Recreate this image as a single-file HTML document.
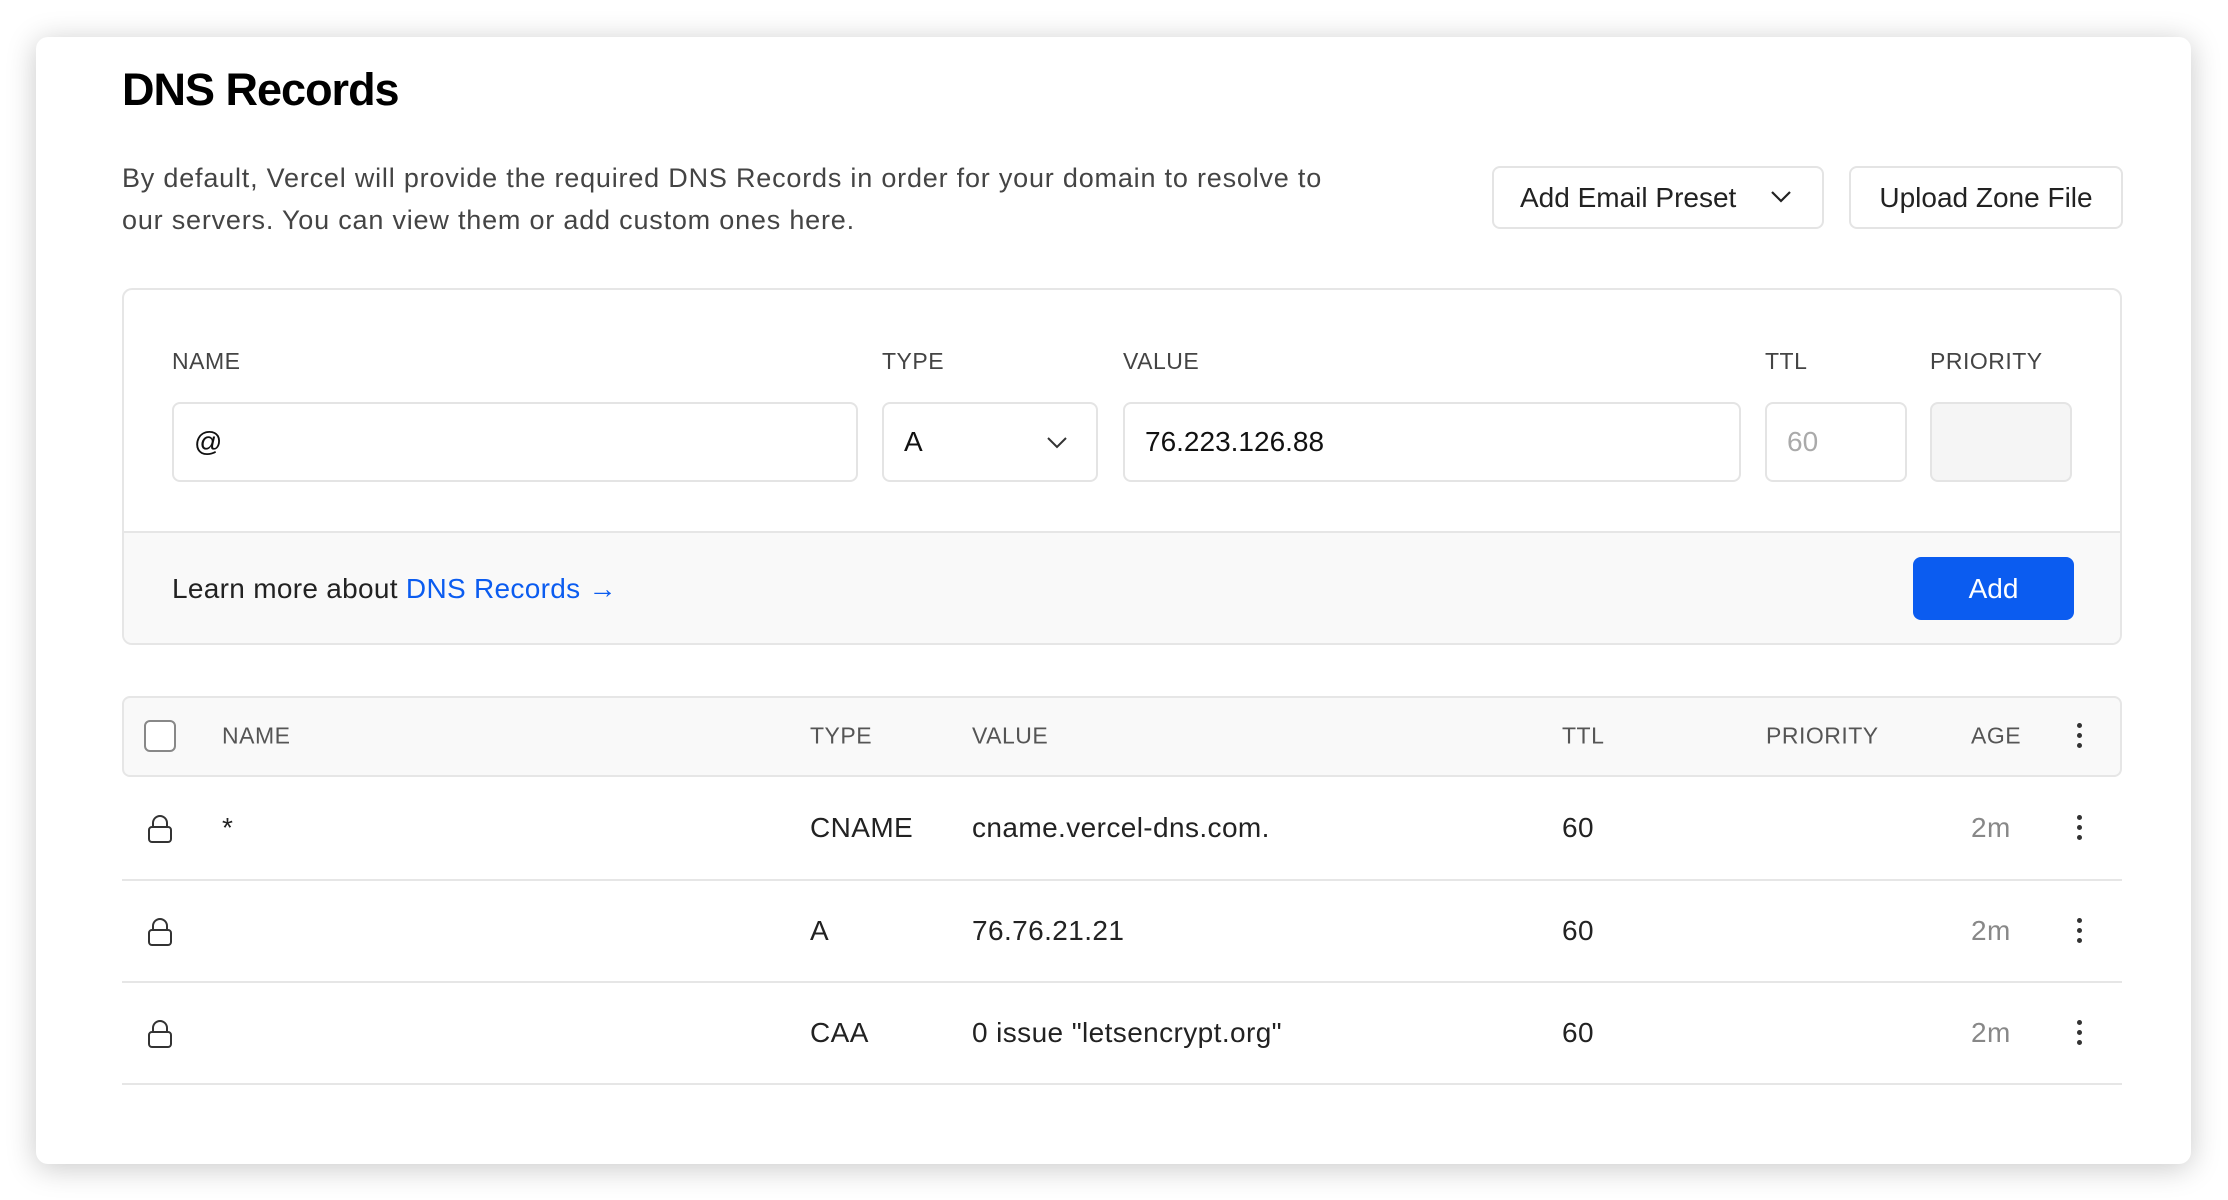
<!DOCTYPE html>
<html><head><style>
*{box-sizing:border-box;margin:0;padding:0}
body{width:2228px;height:1200px;background:#fff;font-family:"Liberation Sans",sans-serif;position:relative;overflow:hidden;color:#111}
.card{position:absolute;left:36px;top:37px;width:2155px;height:1127px;background:#fff;border-radius:12px;box-shadow:0 4px 30px rgba(0,0,0,.22)}
.a{position:absolute;white-space:nowrap}
h1{position:absolute;left:122px;top:64px;font-size:45px;font-weight:bold;letter-spacing:-1px;color:#000}
.desc{position:absolute;left:122px;top:157px;font-size:27px;line-height:42px;color:#444;letter-spacing:.8px}
.btn{position:absolute;top:166px;height:63px;border:2px solid #e4e4e4;border-radius:8px;font-size:28px;color:#222;display:flex;align-items:center;justify-content:center;background:#fff}
.form{position:absolute;left:122px;top:288px;width:2000px;height:357px;border:2px solid #e6e6e6;border-radius:10px;overflow:hidden}
.foot{position:absolute;left:0;right:0;top:241px;bottom:0;background:#f9f9f9;border-top:2px solid #e6e6e6}
.lbl{position:absolute;top:58px;font-size:23px;color:#444;letter-spacing:.5px}
.inp{position:absolute;top:112px;height:80px;border:2px solid #e4e4e4;border-radius:8px;font-size:28px;color:#111;padding-left:20px;display:flex;align-items:center}
.th{position:absolute;left:122px;top:696px;width:2000px;height:81px;background:#f9f9f9;border:2px solid #e6e6e6;border-radius:8px}
.h{position:absolute;top:736px;transform:translateY(-50%);font-size:23px;color:#555;letter-spacing:.5px}
.r{position:absolute;font-size:28px;color:#222;transform:translateY(-50%);letter-spacing:.4px}
.sep{position:absolute;left:122px;width:2000px;height:2px;background:#e6e6e6}
.dots{position:absolute;width:5px}
.dots i{display:block;width:5px;height:5px;border-radius:50%;background:#333;margin-bottom:5px}
</style></head><body>
<div class="card"></div>
<h1>DNS Records</h1>
<div class="desc">By default, Vercel will provide the required DNS Records in order for your domain to resolve to<br>our servers. You can view them or add custom ones here.</div>
<div class="btn" style="left:1492px;width:332px;justify-content:flex-start;padding-left:26px">Add Email Preset
<svg style="position:absolute;right:30px;top:22px" width="22" height="14" viewBox="0 0 22 14"><path d="M2 2l9 9 9-9" fill="none" stroke="#222" stroke-width="2.2"/></svg></div>
<div class="btn" style="left:1849px;width:274px">Upload Zone File</div>

<div class="form">
<div class="lbl" style="left:48px">NAME</div>
<div class="lbl" style="left:758px">TYPE</div>
<div class="lbl" style="left:999px">VALUE</div>
<div class="lbl" style="left:1641px">TTL</div>
<div class="lbl" style="left:1806px">PRIORITY</div>
<div class="inp" style="left:48px;width:686px">@</div>
<div class="inp" style="left:758px;width:216px">A<svg style="position:absolute;right:28px;top:32px" width="22" height="14" viewBox="0 0 22 14"><path d="M2 2l9 9 9-9" fill="none" stroke="#333" stroke-width="2"/></svg></div>
<div class="inp" style="left:999px;width:618px">76.223.126.88</div>
<div class="inp" style="left:1641px;width:142px;color:#aaa">60</div>
<div class="inp" style="left:1806px;width:142px;background:#f5f5f5"></div>
<div class="foot">
<div class="a" style="left:48px;top:40px;font-size:28px;color:#222;letter-spacing:.3px">Learn more about <span style="color:#0b5cf0">DNS Records →</span></div>
<div class="a" style="left:1789px;top:24px;width:161px;height:63px;background:#0b5cf0;border-radius:8px;color:#fff;font-size:28px;display:flex;align-items:center;justify-content:center">Add</div>
</div>
</div>

<div class="th"></div>
<div class="a" style="left:144px;top:720px;width:32px;height:32px;border:2px solid #888;border-radius:6px;background:#fff"></div>
<div class="h" style="left:222px">NAME</div>
<div class="h" style="left:810px">TYPE</div>
<div class="h" style="left:972px">VALUE</div>
<div class="h" style="left:1562px">TTL</div>
<div class="h" style="left:1766px">PRIORITY</div>
<div class="h" style="left:1971px">AGE</div>
<div class="dots" style="left:2077px;top:723px"><i></i><i></i><i></i></div>

<svg class="a" style="left:147px;top:814px" width="26" height="30" viewBox="0 0 26 30"><rect x="2" y="13" width="22" height="15" rx="3" fill="none" stroke="#333" stroke-width="2"/><path d="M6 13V9a7 7 0 0 1 14 0v4" fill="none" stroke="#333" stroke-width="2"/></svg>
<div class="r" style="left:222px;top:828px">*</div>
<div class="r" style="left:810px;top:828px">CNAME</div>
<div class="r" style="left:972px;top:828px">cname.vercel-dns.com.</div>
<div class="r" style="left:1562px;top:828px">60</div>
<div class="r" style="left:1971px;top:828px;color:#888">2m</div>
<div class="dots" style="left:2077px;top:815px"><i></i><i></i><i></i></div>
<div class="sep" style="top:879px"></div>

<svg class="a" style="left:147px;top:917px" width="26" height="30" viewBox="0 0 26 30"><rect x="2" y="13" width="22" height="15" rx="3" fill="none" stroke="#333" stroke-width="2"/><path d="M6 13V9a7 7 0 0 1 14 0v4" fill="none" stroke="#333" stroke-width="2"/></svg>
<div class="r" style="left:810px;top:931px">A</div>
<div class="r" style="left:972px;top:931px">76.76.21.21</div>
<div class="r" style="left:1562px;top:931px">60</div>
<div class="r" style="left:1971px;top:931px;color:#888">2m</div>
<div class="dots" style="left:2077px;top:918px"><i></i><i></i><i></i></div>
<div class="sep" style="top:981px"></div>

<svg class="a" style="left:147px;top:1019px" width="26" height="30" viewBox="0 0 26 30"><rect x="2" y="13" width="22" height="15" rx="3" fill="none" stroke="#333" stroke-width="2"/><path d="M6 13V9a7 7 0 0 1 14 0v4" fill="none" stroke="#333" stroke-width="2"/></svg>
<div class="r" style="left:810px;top:1033px">CAA</div>
<div class="r" style="left:972px;top:1033px">0 issue "letsencrypt.org"</div>
<div class="r" style="left:1562px;top:1033px">60</div>
<div class="r" style="left:1971px;top:1033px;color:#888">2m</div>
<div class="dots" style="left:2077px;top:1020px"><i></i><i></i><i></i></div>
<div class="sep" style="top:1083px"></div>
</body></html>
